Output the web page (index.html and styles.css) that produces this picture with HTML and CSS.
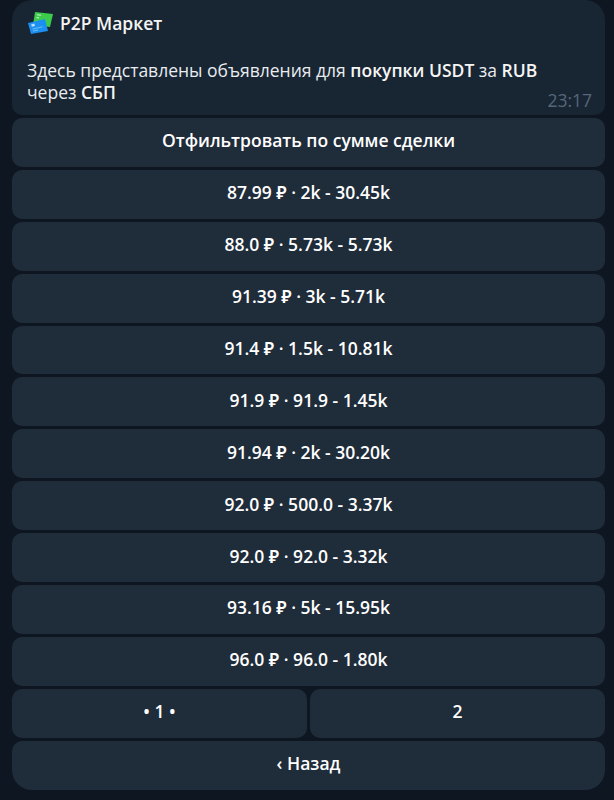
FILE: index.html
```html
<!DOCTYPE html>
<html lang="ru">
<head>
<meta charset="utf-8">
<title>P2P Маркет</title>
<link rel="stylesheet" href="styles.css">
</head>
<body>
<main class="chat">
  <section class="bubble">
    <h1 class="title">
      <svg class="logo" width="26" height="24" viewBox="0 0 26 24" aria-hidden="true">
        <path d="M7 1 25 3 22 16 5 14Z" fill="#3dcb4c"/>
        <path d="M9 3.2 13 3.7 12.8 4.7 8.8 4.2Z" fill="#c8f5cc"/>
        <path d="M8.6 6 11 6.3 10.8 7.4 8.4 7.1Z" fill="#c8f5cc"/>
        <path d="M0 12 17 8 20 20 3 23Z" fill="#1b90f0"/>
        <path d="M3.2 13.2 6.4 12.5 7 15 3.8 15.7Z" fill="#b6dcfb"/>
        <path d="M4.4 17.4 14.5 15.3 14.7 16.3 4.6 18.4Z" fill="#6dbbf7"/>
        <path d="M5 19.6 10 18.6 10.2 19.6 5.2 20.6Z" fill="#6dbbf7"/>
      </svg>
      <span>P2P Маркет</span>
    </h1>
    <p class="message">Здесь представлены объявления для <b>покупки USDT</b> за <b>RUB</b> через <b>СБП</b></p>
    <time class="time">23:17</time>
  </section>
  <nav class="keyboard">
    <button class="key wide">Отфильтровать по сумме сделки</button>
    <button class="key wide">87.99 ₽ · 2k - 30.45k</button>
    <button class="key wide">88.0 ₽ · 5.73k - 5.73k</button>
    <button class="key wide">91.39 ₽ · 3k - 5.71k</button>
    <button class="key wide">91.4 ₽ · 1.5k - 10.81k</button>
    <button class="key wide">91.9 ₽ · 91.9 - 1.45k</button>
    <button class="key wide">91.94 ₽ · 2k - 30.20k</button>
    <button class="key wide">92.0 ₽ · 500.0 - 3.37k</button>
    <button class="key wide">92.0 ₽ · 92.0 - 3.32k</button>
    <button class="key wide">93.16 ₽ · 5k - 15.95k</button>
    <button class="key wide">96.0 ₽ · 96.0 - 1.80k</button>
    <button class="key">• 1 •</button>
    <button class="key">2</button>
    <button class="key wide last">‹ Назад</button>
  </nav>
</main>
</body>
</html>
```
FILE: styles.css
```css
html, body {
  margin: 0;
  height: 100%;
  background: #0e1621;
  overflow: hidden;
}
body {
  font-family: "Open Sans", "Noto Sans", sans-serif;
  color: #f5f5f5;
}
.chat {
  width: 593px;
  margin-left: 12px;
}
.bubble {
  position: relative;
  box-sizing: border-box;
  height: 115px;
  padding: 11px 40px 0 15px;
  background: #182533;
  border-radius: 20px 20px 10px 10px;
}
.title {
  display: flex;
  align-items: center;
  gap: 6px;
  margin: 0;
  padding-left: 1px;
  font-size: 17.5px;
  font-weight: 600;
  line-height: 24px;
  color: #f5f5f5;
}
.logo {
  flex: none;
}
.message {
  margin: 24px 0 0;
  font-size: 17.5px;
  line-height: 22px;
  color: #e9edf0;
}
.message b {
  font-weight: 600;
  color: #f5f5f5;
}
.time {
  position: absolute;
  right: 13px;
  bottom: 4px;
  font-size: 17.5px;
  line-height: 22px;
  color: #56677a;
}
.keyboard {
  display: grid;
  grid-template-columns: 1fr 1fr;
  grid-auto-rows: 48.9px;
  gap: 3px;
  margin-top: 3px;
}
.key {
  padding: 0 0 4px;
  border: 0;
  border-radius: 10px;
  background: #1f2c3a;
  color: #fff;
  font: 600 17.5px/22px "Open Sans", "Noto Sans", sans-serif;
}
.wide {
  grid-column: 1 / -1;
}
.last {
  border-radius: 10px 10px 20px 20px;
}
```
